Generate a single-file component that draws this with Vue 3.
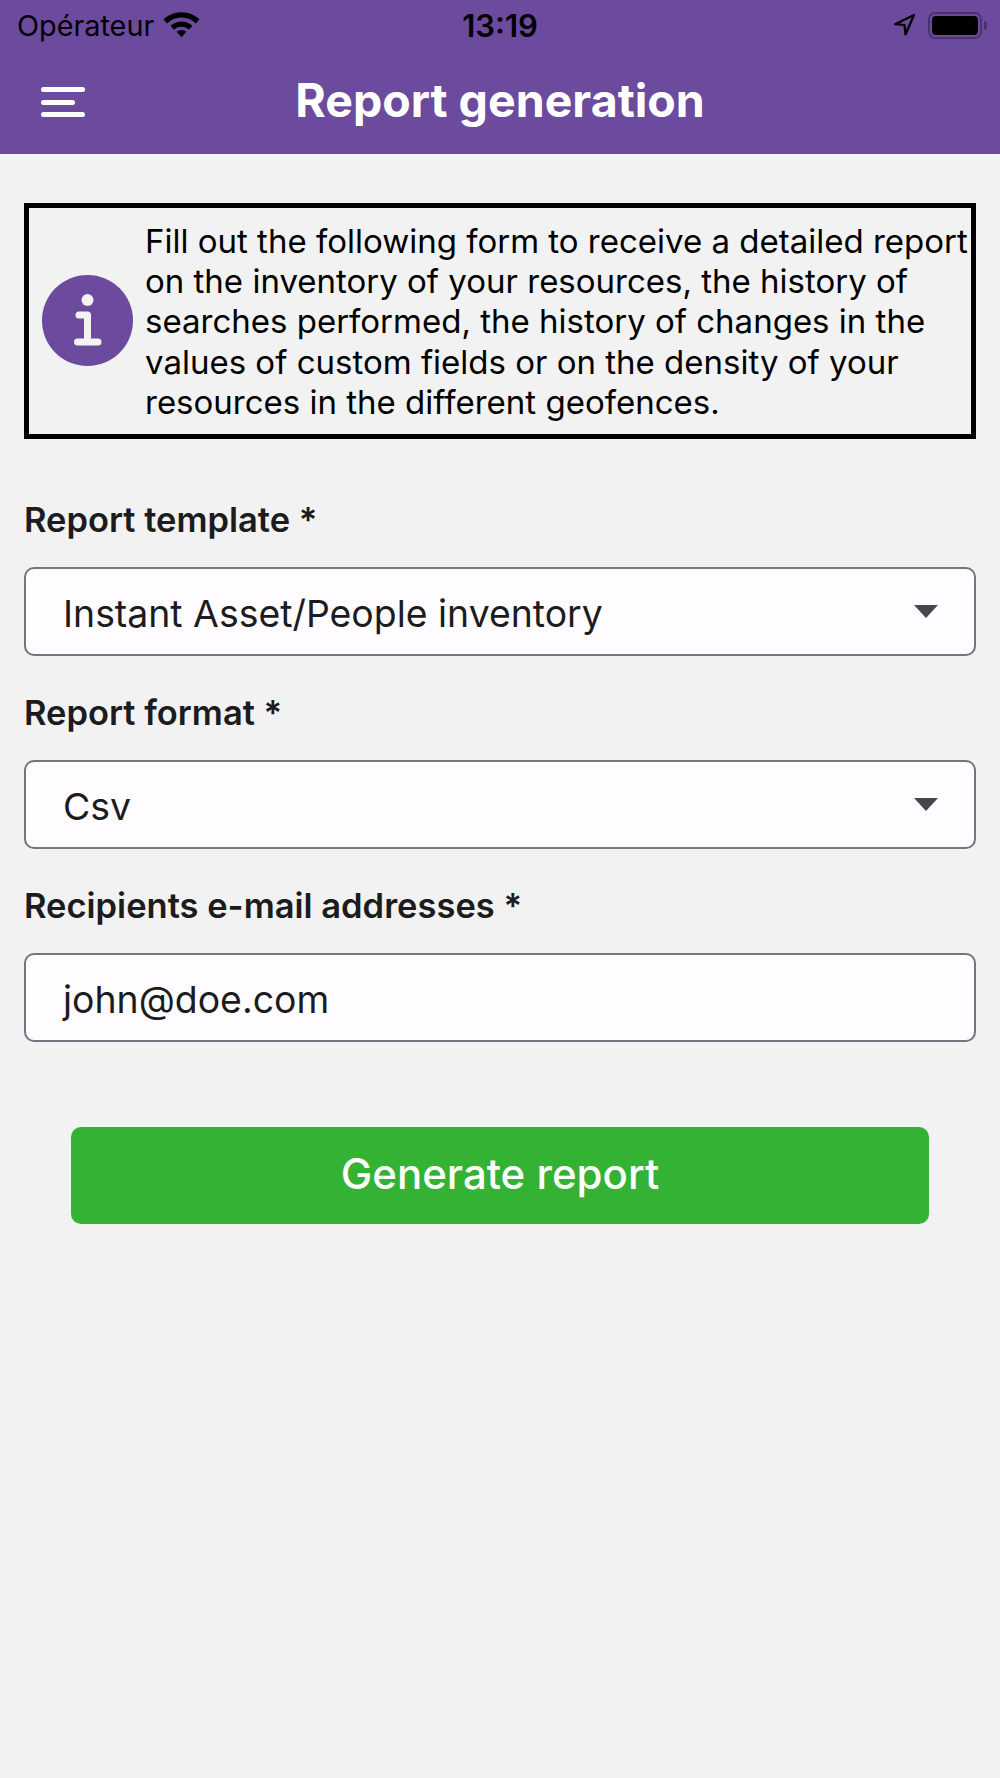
<template>
  <div class="screen">
    <header class="topbar">
      <div class="status">
        <div class="status-left">
          <span class="carrier">Opérateur</span>
          <svg class="wifi" width="37" height="27" viewBox="0 0 36 26">
            <path d="M18 1C11.200 1 5 3.700 0.500 8L4 12C7.700 8.500 12.600 6.300 18 6.300C23.400 6.300 28.300 8.500 32 12L35.500 8C31 3.700 24.800 1 18 1Z" fill="#000" />
            <path d="M18 10C14 10 10.200 11.600 7.300 14.200L10.700 18C12.600 16.300 15.200 15.200 18 15.200C20.800 15.200 23.400 16.300 25.300 18L28.700 14.200C25.800 11.600 22 10 18 10Z" fill="#000" />
            <path d="M18 18.300C16.200 18.300 14.600 19 13.300 20.100L18 25.400L22.700 20.100C21.400 19 19.800 18.300 18 18.300Z" fill="#000" />
          </svg>
        </div>
        <span class="clock">13:19</span>
        <div class="status-right">
          <svg class="arrow" width="24" height="24" viewBox="0 0 24 24">
            <path d="M22 2L3 11.200L12.500 12L13.500 21.500Z" fill="none" stroke="#000" stroke-width="2.200" stroke-linejoin="round" />
          </svg>
          <div class="battery">
            <div class="battery-fill"></div>
          </div>
          <div class="battery-tip"></div>
        </div>
      </div>
      <div class="navbar">
        <button class="menu-btn">
          <span class="bar"></span>
          <span class="bar short"></span>
          <span class="bar"></span>
        </button>
        <h1 class="title">Report generation</h1>
      </div>
    </header>

    <main class="content">
      <div class="notice">
        <svg class="notice-icon" width="91" height="91" viewBox="0 0 91 91">
          <circle cx="45.500" cy="45.500" r="45.500" fill="#6c4a9e" />
          <circle cx="45.500" cy="25" r="6" fill="#f3f3f3" />
          <path d="M37 40H45.500V67M35.500 67H56" fill="none" stroke="#f3f3f3" stroke-width="7" stroke-linecap="round" stroke-linejoin="round" />
        </svg>
        <p class="notice-text">Fill out the following form to receive a detailed report on the inventory of your resources, the history of searches performed, the history of changes in the values of custom fields or on the density of your resources in the different geofences.</p>
      </div>

      <div v-for="field in fields" :key="field.label" class="field">
        <label class="field-label">{{ field.label }} *</label>
        <div class="control">
          <span>{{ field.value }}</span>
          <span v-if="field.select" class="caret"></span>
        </div>
      </div>

      <button class="submit">Generate report</button>
    </main>
  </div>
</template>

<script setup>
const fields = [
  { label: 'Report template', value: 'Instant Asset/People inventory', select: true },
  { label: 'Report format', value: 'Csv', select: true },
  { label: 'Recipients e-mail addresses', value: 'john@doe.com', select: false }
]
</script>

<style>
html,
body {
  margin: 0;
  background: #f2f2f2;
}
</style>

<style scoped>
.screen {
  height: 1778px;
  background: #f2f2f2;
  font-family: Inter, "Liberation Sans", sans-serif;
  overflow: hidden;
}

.topbar {
  height: 154px;
  background: #6c4a9e;
}

.status {
  height: 50px;
  position: relative;
  display: flex;
  align-items: center;
  justify-content: space-between;
  padding: 0 13px 0 17px;
}

.status-left,
.status-right {
  display: flex;
  align-items: center;
}

.carrier {
  font-size: 28.800px;
  color: #000;
}

.wifi {
  margin-left: 9px;
  margin-top: -2px;
}

.clock {
  position: absolute;
  left: 0;
  right: 0;
  top: 7px;
  text-align: center;
  font-size: 31px;
  font-weight: 600;
  color: #000;
}

.arrow {
  margin-right: 12px;
  margin-top: 0;
}

.battery {
  width: 54px;
  height: 27px;
  box-sizing: border-box;
  border: 2px solid #4a3372;
  border-radius: 7px;
  padding: 2px;
}

.battery-fill {
  height: 100%;
  background: #000;
  border-radius: 4px;
}

.battery-tip {
  width: 3px;
  height: 9px;
  margin-left: 2px;
  background: #4a3372;
  border-radius: 0 3px 3px 0;
}

.navbar {
  height: 104px;
  position: relative;
  display: flex;
  align-items: center;
  justify-content: center;
  padding-bottom: 4px;
  box-sizing: border-box;
}

.menu-btn {
  position: absolute;
  left: 41px;
  top: 37px;
  width: 44px;
  height: 30px;
  padding: 0;
  border: 0;
  background: none;
  display: flex;
  flex-direction: column;
  justify-content: space-between;
}

.bar {
  display: block;
  width: 44px;
  height: 5px;
  border-radius: 2.500px;
  background: #fff;
}

.bar.short {
  width: 34px;
}

.title {
  margin: 0;
  font-size: 46.500px;
  font-weight: 700;
  color: #fff;
}

.content {
  padding: 49px 24px 0;
  display: flex;
  flex-direction: column;
}

.notice {
  height: 236px;
  box-sizing: border-box;
  border: 5px solid #000;
  display: flex;
  align-items: center;
  padding-left: 13px;
  margin-bottom: 57px;
}

.notice-icon {
  flex-shrink: 0;
  margin-top: -1px;
}

.notice-text {
  margin: 0 0 0 12px;
  padding-top: 1px;
  font-size: 33px;
  line-height: 40.300px;
  color: #000;
  width: 830px;
  flex-shrink: 0;
}

.field {
  display: flex;
  flex-direction: column;
  margin-bottom: 33px;
}

.field-label {
  font-size: 34.500px;
  font-weight: 600;
  line-height: 48px;
  color: #1c1c1e;
  margin-bottom: 23px;
}

.control {
  height: 89px;
  box-sizing: border-box;
  border: 2.500px solid #77747f;
  border-radius: 10px;
  background: #fffcff;
  display: flex;
  align-items: center;
  justify-content: space-between;
  padding: 4px 36px 0 37px;
  font-size: 37.400px;
  color: #1c1c1e;
}

.caret {
  width: 0;
  height: 0;
  margin-top: -4px;
  border-left: 12px solid transparent;
  border-right: 12px solid transparent;
  border-top: 13px solid #49454f;
}

.submit {
  align-self: center;
  width: 858px;
  height: 97px;
  margin-top: 52px;
  padding: 0 0 4px;
  border: 0;
  border-radius: 10px;
  background: #34b233;
  color: #fff;
  font-family: inherit;
  font-size: 42px;
  font-weight: 500;
}
</style>
